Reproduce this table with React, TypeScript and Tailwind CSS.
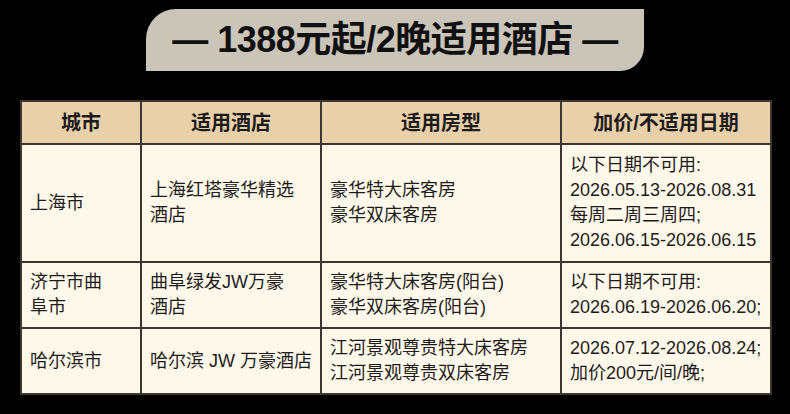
import React from "react";

type Row = {
  city: string[];
  hotel: string[];
  rooms: string[];
  dates: string[];
  h: string;
};

const rows: Row[] = [
  {
    city: ["上海市"],
    hotel: ["上海红塔豪华精选", "酒店"],
    rooms: ["豪华特大床客房", "豪华双床客房"],
    dates: ["以下日期不可用:", "2026.05.13-2026.08.31", "每周二周三周四;", "2026.06.15-2026.06.15"],
    h: "h-[118px]"
  },
  {
    city: ["济宁市曲", "阜市"],
    hotel: ["曲阜绿发JW万豪", "酒店"],
    rooms: ["豪华特大床客房(阳台)", "豪华双床客房(阳台)"],
    dates: ["以下日期不可用:", "2026.06.19-2026.06.20;"],
    h: "h-[66px]"
  },
  {
    city: ["哈尔滨市"],
    hotel: ["哈尔滨 JW 万豪酒店"],
    rooms: ["江河景观尊贵特大床客房", "江河景观尊贵双床客房"],
    dates: ["2026.07.12-2026.08.24;", "加价200元/间/晚;"],
    h: "h-[66px]"
  }
];

function Lines({ items }: { items: string[] }) {
  return (
    <>
      {items.map((t) => (
        <div key={t}>{t}</div>
      ))}
    </>
  );
}

export default function App() {
  const cell = "border-2 border-[#3d3731] pl-[8px] pr-1 align-middle";
  const head = "border-2 border-[#3d3731] text-center align-middle font-bold text-[20px]";

  return (
    <div className="w-[790px] h-[414px] bg-black overflow-hidden font-['Liberation_Sans','Noto_Sans_CJK_SC',sans-serif]">
      <div className="flex justify-center pt-[9px]">
        <div className="w-[498px] h-[62px] bg-[#cbc5b9] rounded-tl-[30px] rounded-br-[24px] flex items-center justify-center">
          <span className="text-[36px] font-bold text-[#111] tracking-[-0.5px] leading-none">
            — 1388元起/2晚适用酒店 —
          </span>
        </div>
      </div>

      <div className="px-[20px] pt-[29px]">
        <table className="w-[750px] table-fixed border-collapse text-[#1e1c1a]">
          <colgroup>
            <col className="w-[120px]" />
            <col className="w-[180px]" />
            <col className="w-[240px]" />
            <col className="w-[210px]" />
          </colgroup>
          <thead>
            <tr className="h-[43px] bg-[#e8d0ab]">
              <th className={head}>城市</th>
              <th className={head}>适用酒店</th>
              <th className={head}>适用房型</th>
              <th className={head}>加价/不适用日期</th>
            </tr>
          </thead>
          <tbody className="bg-[#fdf8ea] text-[18px] leading-[25px]">
            {rows.map((r) => (
              <tr key={r.city.join("")} className={r.h}>
                <td className={cell}>
                  <Lines items={r.city} />
                </td>
                <td className={cell}>
                  <Lines items={r.hotel} />
                </td>
                <td className={cell}>
                  <Lines items={r.rooms} />
                </td>
                <td className={cell}>
                  <Lines items={r.dates} />
                </td>
              </tr>
            ))}
          </tbody>
        </table>
      </div>
    </div>
  );
}
